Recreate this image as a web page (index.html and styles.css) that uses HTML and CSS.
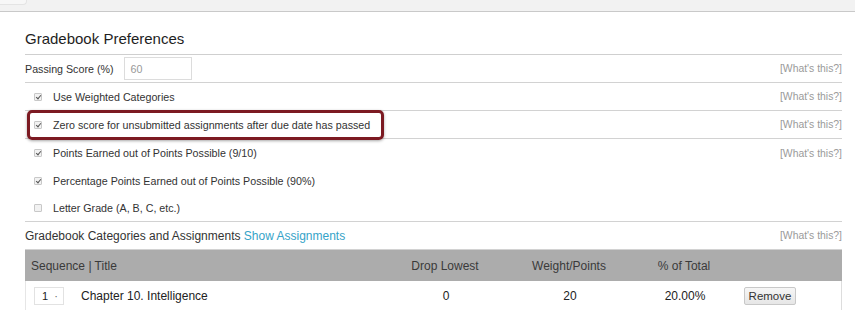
FILE: index.html
```html
<!DOCTYPE html>
<html lang="en">
<head>
    <meta charset="UTF-8">
    <title>Gradebook Preferences</title>
    <link rel="stylesheet" href="styles.css">
</head>
<body>
    <div class="top-bar"><span class="top-tab"></span></div>

    <div class="prefs">
        <h2 class="prefs-title">Gradebook Preferences</h2>

        <div class="pref-row lined">
            <span class="pref-label">Passing Score (%)</span>
            <span class="score-input">60</span>
            <a class="whats-this">[What's this?]</a>
        </div>

        <div class="pref-row lined">
            <span class="check on"></span>
            <span class="pref-label">Use Weighted Categories</span>
            <a class="whats-this">[What's this?]</a>
        </div>

        <div class="pref-row lined highlight-row">
            <span class="check on"></span>
            <span class="pref-label">Zero score for unsubmitted assignments after due date has passed</span>
            <a class="whats-this">[What's this?]</a>
            <span class="callout"></span>
        </div>

        <div class="pref-row">
            <span class="check on"></span>
            <span class="pref-label">Points Earned out of Points Possible (9/10)</span>
            <a class="whats-this">[What's this?]</a>
        </div>

        <div class="pref-row">
            <span class="check on"></span>
            <span class="pref-label">Percentage Points Earned out of Points Possible (90%)</span>
        </div>

        <div class="pref-row short lined">
            <span class="check"></span>
            <span class="pref-label">Letter Grade (A, B, C, etc.)</span>
        </div>

        <div class="pref-row lined categories">
            <span class="pref-label">Gradebook Categories and Assignments <a class="link">Show Assignments</a></span>
            <a class="whats-this">[What's this?]</a>
        </div>

        <div class="cat-table">
            <div class="cat-head">
                <span class="col-title">Sequence | Title</span>
                <span>Drop Lowest</span>
                <span>Weight/Points</span>
                <span>% of Total</span>
                <span></span>
            </div>
            <div class="cat-row">
                <span class="col-title">
                    <span class="seq-select">1 <i>·</i></span>
                    Chapter 10. Intelligence
                </span>
                <span>0</span>
                <span>20</span>
                <span>20.00%</span>
                <span class="col-action"><button class="remove-btn">Remove</button></span>
            </div>
        </div>
    </div>
</body>
</html>
```

FILE: styles.css
```css
* {
    margin: 0;
    padding: 0;
    box-sizing: border-box;
}

body {
    font-family: 'Liberation Sans', Arial, Helvetica, sans-serif;
    color: #333333;
    background: #ffffff;
    width: 855px;
    height: 310px;
    overflow: hidden;
}

.top-bar {
    height: 12px;
    background: #f2f2f2;
    border-bottom: 1px solid #c9c9c9;
}

.top-tab {
    display: block;
    width: 27px;
    height: 5px;
    background: #f7f7f7;
    border-bottom: 1px solid #e4e4e4;
    border-right: 1px solid #e4e4e4;
    border-bottom-right-radius: 4px;
}

.prefs {
    margin-left: 25px;
    width: 817px;
}

.prefs-title {
    font-size: 15px;
    font-weight: normal;
    color: #1e1e1e;
    height: 43px;
    padding-top: 18px;
    border-bottom: 1px solid #cfcfcf;
}

.pref-row {
    position: relative;
    display: flex;
    align-items: center;
    height: 28px;
    font-size: 10.7px;
}

.pref-row.short {
    height: 27px;
}

.pref-row.lined {
    border-bottom: 1px solid #d2d2d2;
}

.pref-label {
    color: #333333;
}

.score-input {
    display: inline-block;
    width: 68px;
    height: 23px;
    margin-left: 10px;
    padding: 5px 6px;
    border: 1px solid #dcdcdc;
    color: #999999;
    font-size: 10.7px;
}

.whats-this {
    margin-left: auto;
    font-size: 10.4px;
    color: #9a9a9a;
}

.check {
    display: inline-block;
    width: 8px;
    height: 8px;
    margin-left: 9px;
    margin-right: 11px;
    border: 1px solid #c8c8c8;
    border-radius: 1px;
    background: #f2f2f2;
    position: relative;
}

.check.on::after {
    content: "";
    position: absolute;
    left: 2px;
    top: 0px;
    width: 2px;
    height: 4px;
    border-right: 1.5px solid #555555;
    border-bottom: 1.5px solid #555555;
    transform: rotate(40deg);
}

.callout {
    position: absolute;
    left: 2px;
    top: -1px;
    width: 357px;
    height: 30px;
    border: 3px solid #7c1a22;
    border-radius: 5px;
    box-shadow: 0 1px 3px rgba(0, 0, 0, 0.35);
}

.categories {
    font-size: 12px;
}

.link {
    color: #35a3c8;
}

.cat-table {
    font-size: 12px;
}

.cat-head,
.cat-row {
    display: grid;
    grid-template-columns: 360px 120px 128px 102px 1fr;
    align-items: center;
    text-align: center;
}

.cat-head {
    height: 31px;
    background: #acacac;
    color: #3a3a3a;
}

.cat-row {
    height: 30px;
    border-left: 1px solid #e6e6e6;
    border-right: 1px solid #dddddd;
    color: #222222;
}

.col-title {
    text-align: left;
    padding-left: 6px;
}

.cat-row .col-title {
    display: flex;
    align-items: center;
    padding-left: 8px;
}

.seq-select {
    display: inline-flex;
    justify-content: space-between;
    align-items: center;
    width: 30px;
    height: 18px;
    margin-right: 17px;
    padding: 0 5px 0 7px;
    border: 1px solid #e2e2e2;
    background: #ffffff;
    font-size: 11px;
}

.seq-select i {
    font-style: normal;
    color: #666666;
}

.col-action {
    text-align: left;
    padding-left: 8px;
}

.remove-btn {
    font-family: 'Liberation Sans', Arial, sans-serif;
    font-size: 11.5px;
    color: #333333;
    width: 52px;
    height: 18px;
    border: 1px solid #c8c8c8;
    border-radius: 2px;
    background: linear-gradient(#f6f6f6, #e6e6e6);
}
```
